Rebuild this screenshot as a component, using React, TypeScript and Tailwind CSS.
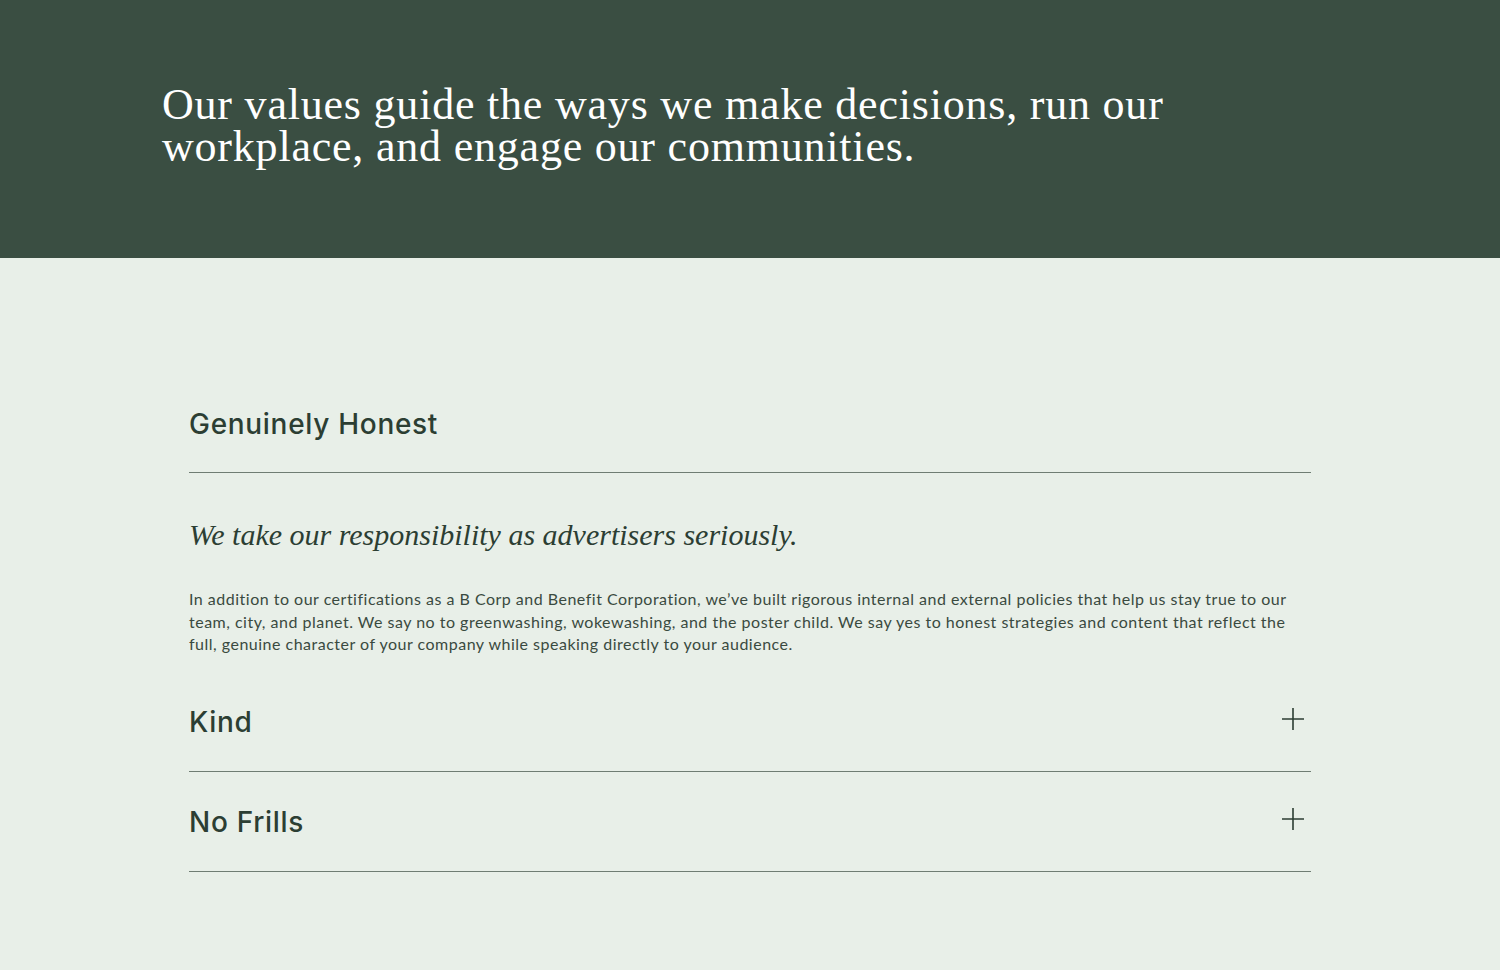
import React, { useState } from 'react';

const serif = { fontFamily: '"Liberation Serif", "DejaVu Serif", serif' };

interface Value {
  title: string;
  lead: string;
  body: string;
}

const values: Value[] = [
  {
    title: 'Genuinely Honest',
    lead: 'We take our responsibility as advertisers seriously.',
    body:
      'In addition to our certifications as a B Corp and Benefit Corporation, we\u2019ve built rigorous internal and external policies that help us stay true to our team, city, and planet. We say no to greenwashing, wokewashing, and the poster child. We say yes to honest strategies and content that reflect the full, genuine character of your company while speaking directly to your audience.',
  },
  {
    title: 'Kind',
    lead: 'We treat people the way we want to be treated.',
    body: 'Kindness shapes how we work with our clients, our partners, and each other.',
  },
  {
    title: 'No Frills',
    lead: 'We keep things simple.',
    body: 'No jargon, no fluff. Just clear work that gets results.',
  },
];

const PlusIcon = () => (
  <svg width="24" height="24" viewBox="0 0 24 24" fill="none" stroke="#2c3e33" strokeWidth="1.6">
    <path d="M12 1v22M1 12h22" />
  </svg>
);

export default function App() {
  const [open, setOpen] = useState(0);

  return (
    <div className="min-h-screen bg-[#e8efe8]">
      <header className="h-[258px] bg-[#3a4e42] pl-[162px] pt-[84px]">
        <h1 className="max-w-[1080px] text-[44px] leading-[42px] tracking-[0.018em] text-white" style={serif}>
          Our values guide the ways we make decisions, run our workplace, and engage our communities.
        </h1>
      </header>

      <section className="mx-[189px] pt-[115px] pb-24" style={{ fontFamily: 'Inter, "Open Sans", sans-serif' }}>
        {values.map((v, i) => (
          <div key={v.title}>
            <button
              onClick={() => setOpen(open === i ? -1 : i)}
              className="flex h-[100px] w-full items-center justify-between border-b border-[#6f7d73] pt-[2px] text-left"
            >
              <span className="text-[28px] font-medium tracking-[0.025em] text-[#2c3e33]">{v.title}</span>
              {open !== i && (
                <span className="mr-[6px] mb-[6px]">
                  <PlusIcon />
                </span>
              )}
            </button>
            {open === i && (
              <div className="pt-[43px] pb-[16px]">
                <p className="text-[30px] italic leading-[38px] text-[#2c3e33]" style={serif}>
                  {v.lead}
                </p>
                <p
                  className="mt-[34px] text-[16px] leading-[22.5px] tracking-[0.031em] text-[#3a4a40]"
                  style={{ fontFamily: 'Lato, "Noto Sans", sans-serif' }}
                >
                  {v.body}
                </p>
              </div>
            )}
          </div>
        ))}
      </section>
    </div>
  );
}
